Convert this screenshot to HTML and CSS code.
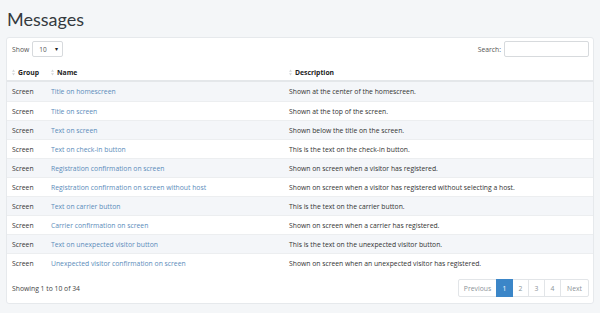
FILE: index.html
```html
<!DOCTYPE html>
<html>
<head>
<meta charset="utf-8">
<link rel="stylesheet" href="styles.css">
</head>
<body>
<h1 class="title">Messages</h1>
<div class="card">
  <div class="toolbar">
    <label class="show">Show <span class="select">10 <span class="caret">&#9662;</span></span></label>
    <label class="search">Search: <span class="input"></span></label>
  </div>
  <table class="table">
    <thead>
      <tr>
        <th class="c-group"><svg class="sort" viewBox="0 0 4 8"><path d="M2 0L4 3H0z"/><path d="M2 8L4 5H0z"/></svg>Group</th>
        <th class="c-name"><svg class="sort" viewBox="0 0 4 8"><path d="M2 0L4 3H0z"/><path d="M2 8L4 5H0z"/></svg>Name</th>
        <th class="c-desc"><svg class="sort" viewBox="0 0 4 8"><path d="M2 0L4 3H0z"/><path d="M2 8L4 5H0z"/></svg>Description</th>
      </tr>
    </thead>
    <tbody>
      <tr><td>Screen</td><td><a>Title on homescreen</a></td><td>Shown at the center of the homescreen.</td></tr>
      <tr><td>Screen</td><td><a>Title on screen</a></td><td>Shown at the top of the screen.</td></tr>
      <tr><td>Screen</td><td><a>Text on screen</a></td><td>Shown below the title on the screen.</td></tr>
      <tr><td>Screen</td><td><a>Text on check-in button</a></td><td>This is the text on the check-in button.</td></tr>
      <tr><td>Screen</td><td><a>Registration confirmation on screen</a></td><td>Shown on screen when a visitor has registered.</td></tr>
      <tr><td>Screen</td><td><a>Registration confirmation on screen without host</a></td><td>Shown on screen when a visitor has registered without selecting a host.</td></tr>
      <tr><td>Screen</td><td><a>Text on carrier button</a></td><td>This is the text on the carrier button.</td></tr>
      <tr><td>Screen</td><td><a>Carrier confirmation on screen</a></td><td>Shown on screen when a carrier has registered.</td></tr>
      <tr><td>Screen</td><td><a>Text on unexpected visitor button</a></td><td>This is the text on the unexpected visitor button.</td></tr>
      <tr><td>Screen</td><td><a>Unexpected visitor confirmation on screen</a></td><td>Shown on screen when an unexpected visitor has registered.</td></tr>
    </tbody>
  </table>
  <div class="footer">
    <div class="info">Showing 1 to 10 of 34</div>
    <div class="pager">
      <span class="pg prev">Previous</span><span class="pg active">1</span><span class="pg">2</span><span class="pg">3</span><span class="pg">4</span><span class="pg next">Next</span>
    </div>
  </div>
</div>
</body>
</html>
```
FILE: styles.css
```css
html, body { margin: 0; padding: 0; }
body {
  background: #f4f6f8;
  font-family: "Open Sans", "Liberation Sans", sans-serif;
  font-size: 6.8px;
  color: #333;
  width: 600px;
  height: 313px;
  overflow: hidden;
}
.title {
  margin: 0;
  padding: 8px 0 0 7px;
  height: 30px;
  box-sizing: border-box;
  font-family: Lato, "Open Sans", sans-serif;
  font-size: 18px;
  font-weight: 400;
  line-height: 22px;
  color: #353a40;
}
.card {
  margin: 7px 6px 0 6px;
  background: #fff;
  border: 1px solid #e6e9ec;
  border-radius: 3px;
  height: 267px;
  box-sizing: border-box;
  display: flex;
  flex-direction: column;
}
.toolbar {
  display: flex;
  justify-content: space-between;
  align-items: center;
  padding: 3px 4px 0 5px;
  height: 16px;
  flex-shrink: 0;
}
.show, .search { display: flex; align-items: center; gap: 3px; color: #555; }
.select {
  display: inline-flex;
  align-items: center;
  justify-content: space-between;
  width: 31px;
  height: 16px;
  box-sizing: border-box;
  border: 1px solid #d7dadd;
  border-radius: 2px;
  padding: 0 4px 0 6px;
  font-size: 6.5px;
}
.caret { font-size: 6px; color: #222; }
.input {
  display: inline-block;
  width: 85px;
  height: 16px;
  box-sizing: border-box;
  border: 1px solid #d7dadd;
  border-radius: 2px;
}
.table {
  border-collapse: collapse;
  width: 100%;
  margin-top: 4px;
  flex-shrink: 0;
}
.table th {
  text-align: left;
  font-weight: 700;
  color: #222;
  height: 16px;
  padding: 3px 0 0 5px;
  border-bottom: 2px solid #e4e7ea;
}
.c-group { width: 34px; }
.c-name { width: 233px; }
.sort {
  display: inline-block;
  width: 3px;
  height: 7px;
  fill: #d3d6d9;
  margin-right: 3px;
  vertical-align: -1px;
}
.table td {
  height: 18px;
  padding: 0 0 0 5px;
  border-top: 1px solid #eceef0;
  white-space: nowrap;
}
.table tbody tr:first-child td { border-top: none; height: 19px; }
.table tbody tr:nth-child(odd) { background: #f4f6f9; }
.table a { color: #5b8cba; }
.footer {
  display: flex;
  justify-content: space-between;
  align-items: center;
  padding: 0 4px 0 5px;
  margin-top: 7px;
  height: 18px;
  flex-shrink: 0;
}
.info { color: #444; }
.pager { display: flex; }
.pg {
  width: 17px;
  height: 18px;
  box-sizing: border-box;
  border: 1px solid #e2e5e8;
  margin-left: -1px;
  display: flex;
  align-items: center;
  justify-content: center;
  color: #8c9399;
}
.pg.prev { width: 39px; border-radius: 2px 0 0 2px; }
.pg.next { width: 29px; border-radius: 0 2px 2px 0; }
.pg.active { background: #3b86c8; border-color: #3b86c8; color: #fff; position: relative; }
```
